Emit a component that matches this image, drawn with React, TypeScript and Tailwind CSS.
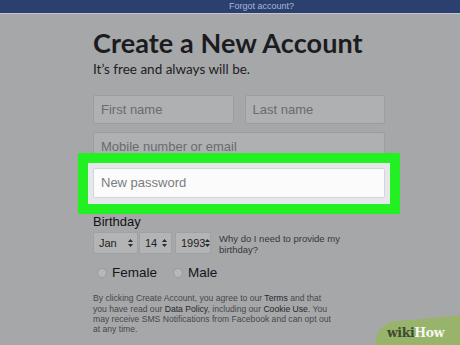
import { ReactNode } from "react";

const sans = "font-['Liberation_Sans',Arial,sans-serif]";

const Field = ({ label, className = "" }: { label: string; className?: string }) => (
  <div
    className={`h-[29px] flex items-center px-[7px] bg-[#afb0b2] border border-[#9c9da0] rounded-[2px] text-[13px] text-[#6a6b6e] ${className}`}
  >
    {label}
  </div>
);

const Arrows = () => (
  <svg width="5" height="8" viewBox="0 0 5 8" className="shrink-0">
    <path d="M2.5 0 L5 3 H0 Z M0 5 H5 L2.5 8 Z" fill="#2a2b2d" />
  </svg>
);

const Select = ({ value, width }: { value: string; width: string }) => (
  <div
    className={`${width} h-[22px] flex items-center justify-between pl-[5px] pr-[4px] bg-[#b3b4b6] border border-[#a0a1a4] rounded-[2px] text-[11px] text-[#1f2022]`}
  >
    <span>{value}</span>
    <Arrows />
  </div>
);

const Radio = ({ children }: { children: ReactNode }) => (
  <div className="flex items-center gap-[5px]">
    <span className="w-[10px] h-[10px] rounded-full bg-[#b6b7b9] border border-[#9a9b9e]" />
    <span className="text-[13.5px] text-[#141517]">{children}</span>
  </div>
);

const Link = ({ children }: { children: ReactNode }) => (
  <span className="text-[#24262c]">{children}</span>
);

export default function App() {
  return (
    <div className={`relative w-[460px] h-[345px] overflow-hidden bg-[#a6a7a9] ${sans}`}>
      <div className="h-[14px] bg-[#2c4070] border-b border-[#c3c6cf] flex items-center">
        <span className="ml-[229px] text-[9px] leading-none text-[#a7b6d8]">Forgot account?</span>
      </div>

      <div className="pl-[93px] w-[385px] box-content pt-[13px]">
        <h1 className="font-['Lato',sans-serif] font-bold text-[27px] leading-[32px] text-[#1b1c1f] tracking-[0.1px]">
          Create a New Account
        </h1>
        <p className="font-['Lato',sans-serif] text-[13.5px] leading-[18px] text-[#1f2023] mt-[1px]">
          It’s free and always will be.
        </p>

        <div className="w-[292px] mt-[17px]">
          <div className="flex gap-[11px]">
            <Field label="First name" className="flex-1" />
            <Field label="Last name" className="flex-1" />
          </div>
          <Field label="Mobile number or email" className="mt-[8px]" />

          <div className="relative mt-[-8px] -mx-[15px] border-[10px] border-[#22f022] bg-[#e6e7ea] pt-[5px] pb-[6px] px-[5px]">
            <div className="h-[30px] flex items-center px-[7px] bg-[#fbfbfb] border border-[#d4d5d8] rounded-[2px] text-[13px] text-[#7a7b7e]">
              New password
            </div>
          </div>
        </div>

        <div className="text-[13px] leading-[16px] text-[#111214]">Birthday</div>

        <div className="flex items-start mt-[2px]">
          <Select value="Jan" width="w-[45px]" />
          <div className="w-[1px]" />
          <Select value="14" width="w-[33px]" />
          <div className="w-[3px]" />
          <Select value="1993" width="w-[36px]" />
          <div className="ml-[8px] text-[9.5px] leading-[11px] text-[#37383b] pt-[1px]">
            Why do I need to provide my
            <br />
            birthday?
          </div>
        </div>

        <div className="flex items-center gap-[16px] mt-[8px] pl-[4px]">
          <Radio>Female</Radio>
          <Radio>Male</Radio>
        </div>

        <p className="mt-[10px] text-[8.6px] leading-[10.3px] text-[#46474a]">
          By clicking Create Account, you agree to our <Link>Terms</Link> and that
          <br />
          you have read our <Link>Data Policy</Link>, including our <Link>Cookie Use</Link>. You
          <br />
          may receive SMS Notifications from Facebook and can opt out
          <br />
          at any time.
        </p>
      </div>

      <div className="absolute left-[377px] bottom-[-18px] w-[110px] h-[40px] bg-[#98b46a] rounded-tl-[22px] rotate-[-5deg] origin-bottom-left" />
      <div className="absolute left-[387px] bottom-[6px] font-['DejaVu_Serif',serif] font-bold text-[12.5px] leading-none tracking-[-0.4px]">
        <span className="text-[#3d4a32]">wiki</span>
        <span className="text-[#f4f6ef]">How</span>
      </div>
    </div>
  );
}
